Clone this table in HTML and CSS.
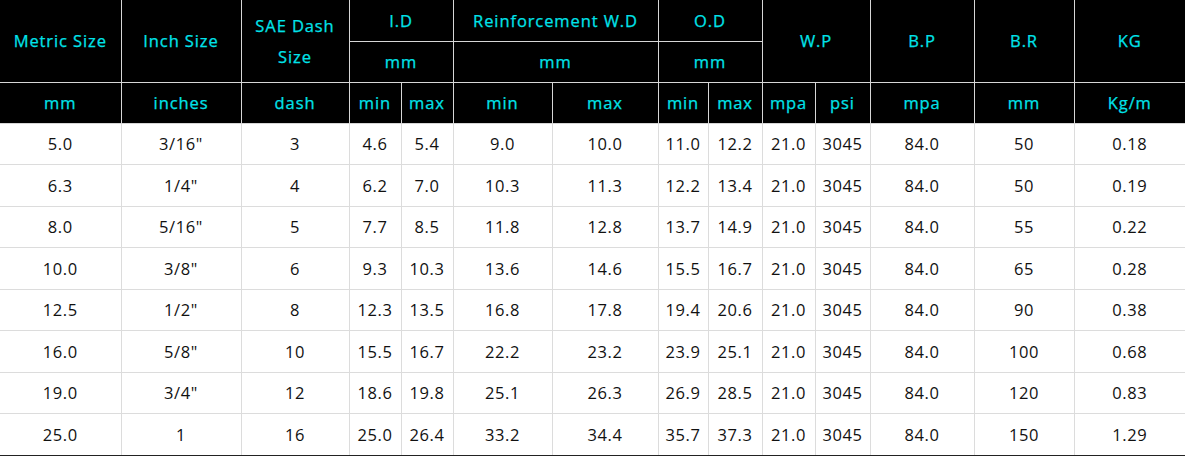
FILE: index.html
```html
<!DOCTYPE html>
<html>
<head>
<meta charset="utf-8">
<link rel="stylesheet" href="styles.css">
</head>
<body>
<table class="spec">
<colgroup>
<col class="c-metric"><col class="c-inch"><col class="c-dash">
<col class="c-idmin"><col class="c-idmax">
<col class="c-rmin"><col class="c-rmax">
<col class="c-odmin"><col class="c-odmax">
<col class="c-mpa"><col class="c-psi">
<col class="c-bp"><col class="c-br"><col class="c-kg">
</colgroup>
<thead>
<tr class="h1">
<th rowspan="2">Metric Size</th>
<th rowspan="2">Inch Size</th>
<th rowspan="2" class="wrap">SAE Dash Size</th>
<th colspan="2">I.D</th>
<th colspan="2">Reinforcement W.D</th>
<th colspan="2">O.D</th>
<th colspan="2" rowspan="2">W.P</th>
<th rowspan="2">B.P</th>
<th rowspan="2">B.R</th>
<th rowspan="2">KG</th>
</tr>
<tr class="h2">
<th colspan="2">mm</th>
<th colspan="2">mm</th>
<th colspan="2">mm</th>
</tr>
<tr class="h3">
<th>mm</th><th>inches</th><th>dash</th>
<th>min</th><th>max</th><th>min</th><th>max</th><th>min</th><th>max</th>
<th>mpa</th><th>psi</th><th>mpa</th><th>mm</th><th>Kg/m</th>
</tr>
</thead>
<tbody>
<tr><td>5.0</td><td>3/16"</td><td>3</td><td>4.6</td><td>5.4</td><td>9.0</td><td>10.0</td><td>11.0</td><td>12.2</td><td>21.0</td><td>3045</td><td>84.0</td><td>50</td><td>0.18</td></tr>
<tr><td>6.3</td><td>1/4"</td><td>4</td><td>6.2</td><td>7.0</td><td>10.3</td><td>11.3</td><td>12.2</td><td>13.4</td><td>21.0</td><td>3045</td><td>84.0</td><td>50</td><td>0.19</td></tr>
<tr><td>8.0</td><td>5/16"</td><td>5</td><td>7.7</td><td>8.5</td><td>11.8</td><td>12.8</td><td>13.7</td><td>14.9</td><td>21.0</td><td>3045</td><td>84.0</td><td>55</td><td>0.22</td></tr>
<tr><td>10.0</td><td>3/8"</td><td>6</td><td>9.3</td><td>10.3</td><td>13.6</td><td>14.6</td><td>15.5</td><td>16.7</td><td>21.0</td><td>3045</td><td>84.0</td><td>65</td><td>0.28</td></tr>
<tr><td>12.5</td><td>1/2"</td><td>8</td><td>12.3</td><td>13.5</td><td>16.8</td><td>17.8</td><td>19.4</td><td>20.6</td><td>21.0</td><td>3045</td><td>84.0</td><td>90</td><td>0.38</td></tr>
<tr><td>16.0</td><td>5/8"</td><td>10</td><td>15.5</td><td>16.7</td><td>22.2</td><td>23.2</td><td>23.9</td><td>25.1</td><td>21.0</td><td>3045</td><td>84.0</td><td>100</td><td>0.68</td></tr>
<tr><td>19.0</td><td>3/4"</td><td>12</td><td>18.6</td><td>19.8</td><td>25.1</td><td>26.3</td><td>26.9</td><td>28.5</td><td>21.0</td><td>3045</td><td>84.0</td><td>120</td><td>0.83</td></tr>
<tr><td>25.0</td><td>1</td><td>16</td><td>25.0</td><td>26.4</td><td>33.2</td><td>34.4</td><td>35.7</td><td>37.3</td><td>21.0</td><td>3045</td><td>84.0</td><td>150</td><td>1.29</td></tr>
</tbody>
</table>
</body>
</html>
```
FILE: styles.css
```css
html, body {
  margin: 0;
  padding: 0;
  background: #fff;
}

.spec {
  width: 1185px;
  border-collapse: collapse;
  table-layout: fixed;
  font-family: "Open Sans", "DejaVu Sans", sans-serif;
  font-size: 16px;
  border-bottom: 1px solid #222;
}

.c-metric { width: 121px; }
.c-inch { width: 120px; }
.c-dash { width: 108px; }
.c-idmin { width: 52px; }
.c-idmax { width: 52px; }
.c-rmin { width: 99px; }
.c-rmax { width: 106px; }
.c-odmin { width: 50px; }
.c-odmax { width: 54px; }
.c-mpa { width: 53px; }
.c-psi { width: 55px; }
.c-bp { width: 104px; }
.c-br { width: 100px; }
.c-kg { width: 111px; }

.spec th {
  background: #000;
  color: #00e3ea;
  font-weight: 500;
  font-size: 16.5px;
  border: 1px solid #d6d6d6;
  padding: 0;
  text-align: center;
  white-space: nowrap;
  letter-spacing: 0.9px;
  -webkit-text-stroke: 0.25px #00e3ea;
}

.spec th.wrap {
  white-space: normal;
  line-height: 31px;
}

.spec thead tr { height: 41px; }

.spec td {
  border: 1px solid #dcdcdc;
  color: #111;
  text-align: center;
  padding: 0;
  height: 40.5px;
  font-size: 16.5px;
  letter-spacing: 0.6px;
}

.spec tr > :first-child { border-left: none; }
.spec tr > :last-child { border-right: none; }
.spec thead tr.h1 > * { border-top: none; }
.spec tbody tr:last-child td { border-bottom: 1px solid #222; }
```
